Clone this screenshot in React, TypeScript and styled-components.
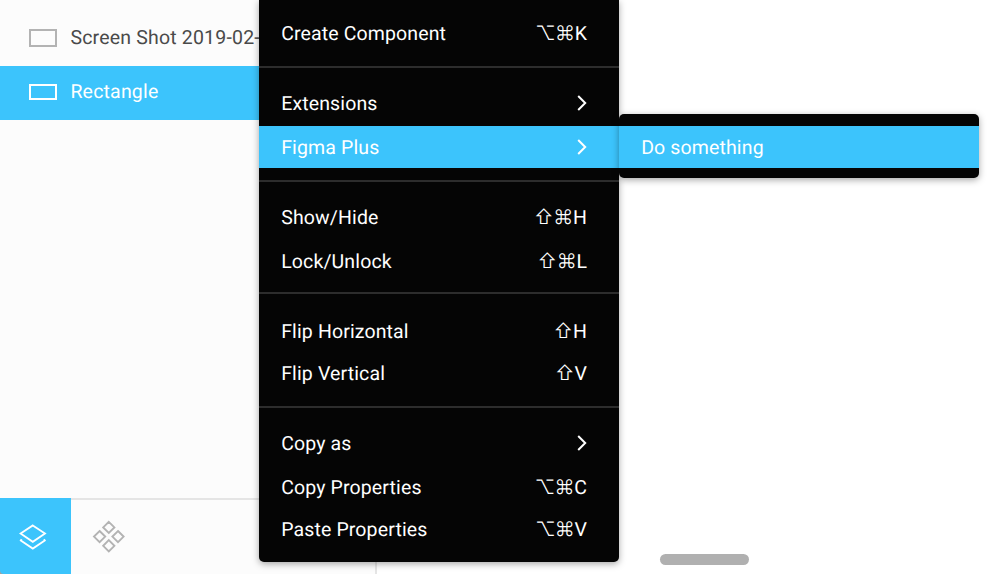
import React from "react";
import styled, { createGlobalStyle } from "styled-components";

const BLUE = "#3cc4fc";

const Global = createGlobalStyle`
  * { box-sizing: border-box; }
  html, body { margin: 0; background: #fff; overflow: hidden; }
  body {
    font-family: Roboto, sans-serif;
    font-size: 19.5px;
    letter-spacing: 0.13px;
    text-rendering: geometricPrecision;
  }
`;

const Screen = styled.main`
  position: relative;
  width: 998px;
  height: 574px;
  overflow: hidden;
  background: #fff;
`;

const Sidebar = styled.aside`
  display: flex;
  flex-direction: column;
  width: 377px;
  height: 574px;
  background: #fcfcfc;
  border-right: 2px solid #e5e5e5;
`;

const Layers = styled.div`
  flex: 1;
  padding-top: 12px;
`;

const Layer = styled.div<{ $selected?: boolean }>`
  display: flex;
  align-items: center;
  height: 54px;
  padding: 0 0 3px 29px;
  gap: 13.4px;
  white-space: nowrap;
  letter-spacing: 0.19px;
  color: ${(p) => (p.$selected ? "#fff" : "#4a4a4a")};
  background: ${(p) => (p.$selected ? BLUE : "transparent")};
`;

const Shape = styled.span<{ $selected?: boolean }>`
  width: 28px;
  height: ${(p) => (p.$selected ? 16 : 18)}px;
  margin-top: 1px;
  border: 2px solid ${(p) => (p.$selected ? "#fff" : "#b3b3b3")};
`;

const Tabs = styled.nav`
  display: flex;
  height: 76px;
  background: linear-gradient(to right, #a0a0a0 10px, transparent 10px);
`;

const Tab = styled.div<{ $active?: boolean }>`
  display: flex;
  align-items: center;
  justify-content: center;
  width: ${(p) => (p.$active ? 71 : 75)}px;
  padding: ${(p) => (p.$active ? "2px 5px 0 0" : "0")};
  background: ${(p) => (p.$active ? BLUE : "transparent")};
  border-top: ${(p) => (p.$active ? "0" : "2px solid #e5e5e5")};
  border-bottom-left-radius: ${(p) => (p.$active ? 4 : 0)}px;
`;

const TabRest = styled.div`
  flex: 1;
  border-top: 2px solid #e5e5e5;
`;

const Menu = styled.div`
  position: absolute;
  left: 259px;
  top: 0;
  width: 360px;
  height: 562px;
  color: #fff;
  background: #050505;
  border-radius: 0 0 5px 5px;
  box-shadow: 0 2px 7px rgba(0, 0, 0, 0.35);
`;

const Group = styled.div<{ $top: number; $bottom: number; $gap?: number }>`
  display: flex;
  flex-direction: column;
  gap: ${(p) => p.$gap ?? 0}px;
  padding: ${(p) => p.$top}px 0 ${(p) => p.$bottom}px;
  & + & { border-top: 2px solid #2d2d2d; }
`;

const Item = styled.div<{ $active?: boolean; $spaced?: boolean }>`
  display: flex;
  align-items: center;
  justify-content: space-between;
  height: 42px;
  margin-top: ${(p) => (p.$spaced ? 2 : 0)}px;
  padding: 0 32px 0 22.2px;
  background: ${(p) => (p.$active ? BLUE : "transparent")};
`;

const Submenu = styled.div`
  position: absolute;
  left: 619px;
  top: 114px;
  width: 360px;
  height: 64px;
  padding-top: 12px;
  color: #fff;
  background: #050505;
  border-radius: 5px;
  box-shadow: 0 2px 7px rgba(0, 0, 0, 0.35);
`;

const Keys = styled.span`
  display: flex;
  align-items: center;
  letter-spacing: 0;
`;

const Modifier = styled.span`
  display: flex;
  justify-content: center;
  width: 19.5px;
  font-family: Inter, "DejaVu Sans", sans-serif;
  font-size: 20px;
  font-weight: 300;
  line-height: 24px;
`;

const Scrollbar = styled.div`
  position: absolute;
  left: 659.5px;
  top: 554px;
  width: 89px;
  height: 11px;
  border-radius: 6px;
  background: #b0b0b0;
`;

const Chevron = () => (
  <svg width="12" height="18" viewBox="0 0 12 18" fill="none" stroke="#fff" strokeWidth="2">
    <path d="M3.2 2 L10.2 9 L3.2 16" />
  </svg>
);

const LayersIcon = () => (
  <svg width="28" height="28" viewBox="0 0 28 28" fill="none" stroke="#fff" strokeWidth="1.8">
    <path d="M13.8 2.4 L26 10.6 L13.8 18.8 L1.6 10.6 Z M2.6 16.2 L1.8 17.4 L13.8 25.6 L25.8 17.4 L25 16.2" />
  </svg>
);

const ComponentsIcon = () => (
  <svg width="34" height="34" viewBox="0 0 34 34" fill="none" stroke="#b3b3b3" strokeWidth="1.9">
    <path d="M16.8 1.8 L22.4 7.4 L16.8 13 L11.2 7.4 Z M16.8 20.2 L22.4 25.8 L16.8 31.4 L11.2 25.8 Z M7.6 11 L13.2 16.6 L7.6 22.2 L2 16.6 Z M26 11 L31.6 16.6 L26 22.2 L20.4 16.6 Z" />
  </svg>
);

const Shortcut = ({ mods, letter }: { mods: string; letter: string }) => (
  <Keys>
    {Array.from(mods).map((m) => (
      <Modifier key={m}>{m}</Modifier>
    ))}
    {letter}
  </Keys>
);

export default function App() {
  return (
    <>
      <Global />
      <Screen>
        <Sidebar>
          <Layers>
            <Layer><Shape />Screen Shot 2019-02-</Layer>
            <Layer $selected><Shape $selected />Rectangle</Layer>
          </Layers>
          <Tabs>
            <Tab $active><LayersIcon /></Tab>
            <Tab><ComponentsIcon /></Tab>
            <TabRest />
          </Tabs>
        </Sidebar>
        <Menu>
          <Group $top={12} $bottom={12}>
            <Item>Create Component<Shortcut mods="⌥⌘" letter="K" /></Item>
          </Group>
          <Group $top={14} $bottom={12} $gap={2}>
            <Item>Extensions<Chevron /></Item>
            <Item $active>Figma Plus<Chevron /></Item>
          </Group>
          <Group $top={14} $bottom={10} $gap={2}>
            <Item>Show/Hide<Shortcut mods="⇧⌘" letter="H" /></Item>
            <Item>Lock/Unlock<Shortcut mods="⇧⌘" letter="L" /></Item>
          </Group>
          <Group $top={16} $bottom={12}>
            <Item>Flip Horizontal<Shortcut mods="⇧" letter="H" /></Item>
            <Item>Flip Vertical<Shortcut mods="⇧" letter="V" /></Item>
          </Group>
          <Group $top={14} $bottom={12}>
            <Item>Copy as<Chevron /></Item>
            <Item $spaced>Copy Properties<Shortcut mods="⌥⌘" letter="C" /></Item>
            <Item>Paste Properties<Shortcut mods="⌥⌘" letter="V" /></Item>
          </Group>
        </Menu>
        <Submenu>
          <Item $active>Do something</Item>
        </Submenu>
        <Scrollbar />
      </Screen>
    </>
  );
}
